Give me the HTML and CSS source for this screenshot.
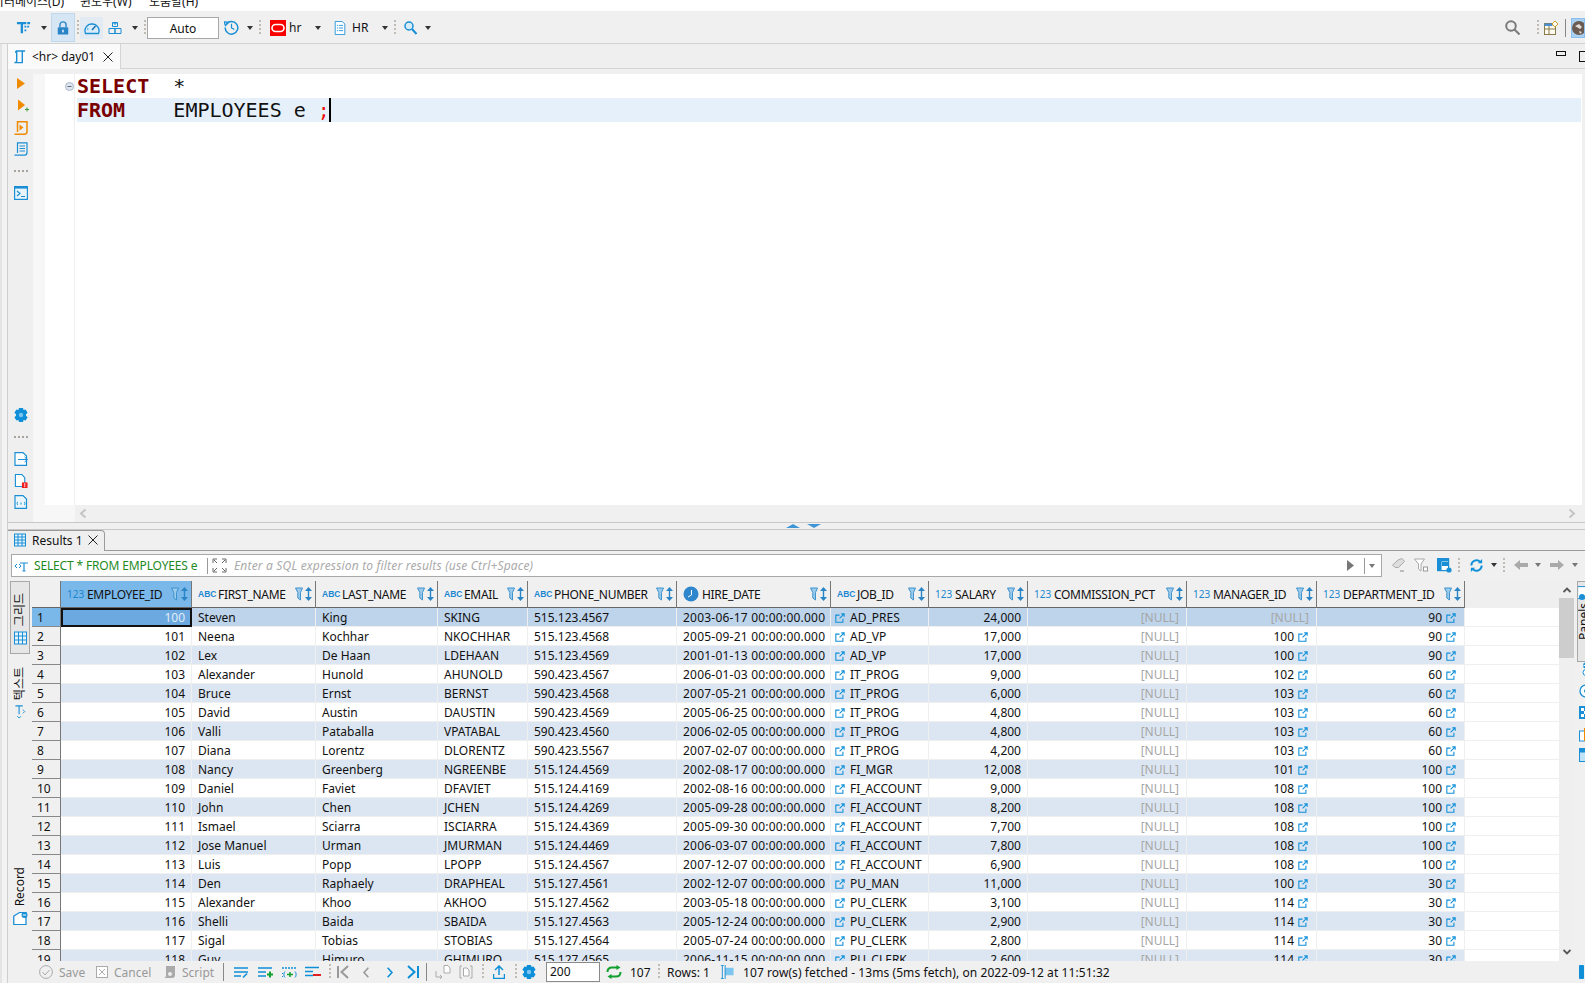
FILE: index.html
```html
<!DOCTYPE html>
<html lang="ko">
<head>
<meta charset="utf-8">
<title>DBeaver</title>
<link rel="stylesheet" href="styles.css">
</head>
<body>
<svg class="defs" width="0" height="0">
<symbol id="lnk" viewBox="0 0 12 12"><path d="M7.500 1H11V4.500M11 1L5.500 6.500M9.500 7V11H1V2.500H5.500" fill="none" stroke="#0e8fd8" stroke-width="1.300"/></symbol>
<symbol id="flt" viewBox="0 0 8 14"><path d="M.5 1h7L5.500 5.500V13L2.800 11V5.500z" fill="#9ccbec" stroke="#3d93cf"/></symbol>
<symbol id="srt" viewBox="0 0 7 14"><path d="M3.500 0L7 4H4.200v6H7l-3.500 4L0 10h2.800V4H0z" fill="#2a85c6"/></symbol>
<symbol id="clk" viewBox="0 0 16 16"><circle cx="8" cy="8" r="7.500" fill="#2f86cc"/><path d="M8.500 4v5L5 11" fill="none" stroke="#fff"/></symbol>
<symbol id="gear" viewBox="0 0 14 14"><path d="M5 0h4l.6 2 2-.6 2 3.400L12 6.300v1.400l1.600 1.500-2 3.400-2-.6L9 14H5l-.6-2-2 .6-2-3.400L2 7.700V6.300L.4 4.800l2-3.400 2 .6z" fill="#0e8fd8"/><circle cx="7" cy="7" r="2.200" fill="#7cc5f0"/></symbol>
<symbol id="sync" viewBox="0 0 16 16"><path d="M2.500 8A5.500 5.500 0 0 1 12 4.200M13.500 8A5.500 5.500 0 0 1 4 11.800" fill="none" stroke="#0e8fd8" stroke-width="2"/><path d="M9.500 5.500h4.500V1zM6.500 10.500H2V15z" fill="#0e8fd8"/></symbol>
</svg>

<div class="app">
  <div class="menubar">
    <span class="menu menu-data"><span>데이터베이스(D)</span></span>
    <span class="menu menu-win">윈도우(W)</span>
    <span class="menu menu-help">도움말(H)</span>
  </div>

  <div class="toolbar">
    <svg class="ic w15 ml16" viewBox="0 0 16 16"><path d="M1 2h10v2.500H7.500V14H5V4.500H1z" fill="#1a8fd6"/><path d="M12 2h3v2.500h-3zM9 6h2v2H9zM12 6h2v2h-2zM9 10h2v2H9z" fill="#1a8fd6"/></svg>
    <i class="dd ml10"></i>
    <span class="tbtn lockbtn ml4"><svg class="ic w14" viewBox="0 0 14 16"><path d="M3.500 7V4.500a3.500 3.500 0 0 1 7 0V7" fill="none" stroke="#2a85c6" stroke-width="1.600"/><rect x="1" y="7" width="12" height="8.500" rx="1" fill="#2a85c6"/><rect x="6" y="10" width="2" height="3" fill="#cfe3f5"/></svg></span>
    <i class="sep ml2"></i>
    <span class="tbtn gaugebtn ml1"><svg class="ic w16" viewBox="0 0 16 14"><path d="M1.500 12.500a7 7 0 1 1 13 0z" fill="#d8ecfa" stroke="#1a8fd6" stroke-width="1.300"/><path d="M8 9l3.500-4" stroke="#1a6fae" stroke-width="1.500"/><path d="M3 8h1.500M8 2.500V4" stroke="#1a8fd6"/></svg></span>
    <svg class="ic w14 ml5" viewBox="0 0 14 14"><path d="M4.500 1.500h5v4h-5zM1 7.500h6v5H1zM7 7.500h6v5H7zM6 1.500v1.500h2V1.500" fill="none" stroke="#1a8fd6"/></svg>
    <i class="dd ml10"></i>
    <i class="sep ml6"></i>
    <span class="autobox ml1">Auto</span>
    <svg class="ic w15 ml5" viewBox="0 0 16 16"><path d="M2.500 4.500A6.700 6.700 0 1 1 1.300 8" fill="none" stroke="#1a8fd6" stroke-width="1.600"/><path d="M0 2l5 .5L1.500 6zM8 4v4.500L11 10" fill="none" stroke="#1a8fd6" stroke-width="1.300"/></svg>
    <i class="dd ml8"></i>
    <i class="sep ml6"></i>
    <svg class="ic w16 ml9" viewBox="0 0 16 16"><rect width="16" height="16" fill="#f80000"/><rect x="2" y="4.500" width="12" height="7" rx="3.500" fill="none" stroke="#fff" stroke-width="1.600"/></svg>
    <span class="tbtext w25 ml3">hr</span>
    <i class="dd ml1"></i>
    <svg class="ic w12 ml13" viewBox="0 0 12 16"><path d="M.5.500H8.500L11.500 3.500V15.500H.5z" fill="#fff" stroke="#1a8fd6"/><path d="M2.500 5h1.500M5 5h4.500M2.500 8h1.500M5 8h4.500M2.500 11h1.500M5 11h4.500" stroke="#1a8fd6"/></svg>
    <span class="tbtext w30 ml6">HR</span>
    <i class="dd"></i>
    <i class="sep ml6"></i>
    <svg class="ic w13 ml8" viewBox="0 0 13 14"><circle cx="5" cy="5" r="4" fill="#d8ecfa" stroke="#1a8fd6" stroke-width="1.500"/><path d="M8 8l4.500 5" stroke="#1a8fd6" stroke-width="2"/></svg>
    <i class="dd ml8"></i>
    <span class="grow"></span>
    <svg class="ic w15" viewBox="0 0 15 15"><circle cx="6" cy="6" r="4.800" fill="none" stroke="#7a7a7a" stroke-width="2"/><path d="M9.500 9.500l5 5" stroke="#7a7a7a" stroke-width="2"/></svg>
    <i class="sep ml17"></i>
    <svg class="ic w14 ml5" viewBox="0 0 14 14"><rect x=".5" y="2.500" width="11" height="11" fill="#fdfbf0" stroke="#8a7a4a"/><path d="M.5 2.500h8v2.500h-8z" fill="#4a90d0"/><path d="M.5 8h11M5 5v8.500" stroke="#8a7a4a"/><path d="M11 0l3 3-3 3-3-3z" fill="#fff" stroke="#d0a020"/></svg>
    <i class="vline ml7"></i>
    <span class="perspbtn ml5"><svg class="ic w14" viewBox="0 0 14 14"><circle cx="7" cy="7" r="7" fill="#6b5a50"/><path d="M3 5l4-2 3 3-2 2zM7 10l3 1-2 2z" fill="#e0dcd8"/></svg></span>
  </div>

  <div class="workspace">
    <div class="gutter"></div>
    <div class="panes">
      <div class="tabstrip">
        <div class="tab-sql">
          <svg class="ic w13" viewBox="0 0 13 15"><path d="M3.500 12.500V1h9M3.500 1c-1.500 0-1.500 2 0 2M9.500 1v12.500H1c1 0 2-.5 2.500-1.500" fill="none" stroke="#1a8fd6" stroke-width="1.500"/></svg>
          <span class="tabtext">&lt;hr&gt; day01</span>
          <svg class="ic w10 ml6" viewBox="0 0 10 10"><path d="M.5.500l9 9M9.500.500l-9 9" stroke="#222"/></svg>
        </div>
        <span class="grow"></span>
        <i class="win-min"></i>
        <i class="win-max"></i>
      </div>

      <div class="editor">
        <div class="rail">
          <svg class="ic w8" viewBox="0 0 8 11"><path d="M0 0l8 5.500L0 11z" fill="#f08a00"/></svg>
          <svg class="ic w14 mt10 railshift" viewBox="0 0 14 13"><path d="M3 0l7 5.500L3 11z" fill="#f08a00"/><path d="M10 10h4M12 8v4" stroke="#3a9a3a"/></svg>
          <svg class="ic w14 mt8" viewBox="0 0 14 14"><path d="M3.500 11V.8H13V10.500c0 1.500-1 2.700-2.500 2.700H.5" fill="none" stroke="#f08a00" stroke-width="1.500"/><path d="M5.500 3.500l4 3-4 3z" fill="#f08a00"/></svg>
          <svg class="ic w14 mt7" viewBox="0 0 14 14"><path d="M3.500 11V.8H13V10.500c0 1.500-1 2.700-2.500 2.700H.5" fill="none" stroke="#1a8fd6" stroke-width="1.200"/><path d="M5.500 4H11M5.500 6.500H11M5.500 9H11" stroke="#1a8fd6"/></svg>
          <i class="hdots mt14"></i>
          <svg class="ic w14 mt14" viewBox="0 0 14 14"><rect x=".6" y=".6" width="12.800" height="12.800" fill="#e8f4fc" stroke="#1a8fd6" stroke-width="1.200"/><path d="M.6.600h12.800v2H.6z" fill="#1a8fd6"/><path d="M3 5l3 2.500L3 10M7 10.500h4" fill="none" stroke="#1a8fd6" stroke-width="1.200"/></svg>
          <svg class="ic w14 push"><use href="#gear"/></svg>
          <i class="hdots mt14"></i>
          <svg class="ic w14 mt14" viewBox="0 0 14 14"><path d="M1 .6h8L12.500 4V13.400H1z" fill="#fff" stroke="#1a8fd6" stroke-width="1.200"/><path d="M4 7.500h9M10.500 5l3 2.500-3 2.500" fill="none" stroke="#1a8fd6"/></svg>
          <svg class="ic w14 mt8" viewBox="0 0 14 15"><path d="M1 .6h7L11 4V13.400H1z" fill="#fff" stroke="#1a8fd6" stroke-width="1.200"/><rect x="8" y="9" width="6" height="6" fill="#f02020"/><path d="M11 10v2.500M11 13v1" stroke="#fff"/></svg>
          <svg class="ic w14 mt7" viewBox="0 0 14 14"><path d="M1 .6h8L12.500 4V13.400H1z" fill="#eaf5fc" stroke="#1a8fd6" stroke-width="1.200"/><path d="M4 7c-1.500 0-1 3 0 3M10 7c1.500 0 1 3 0 3M7 7.500v2" fill="none" stroke="#1a8fd6"/></svg>
        </div>
        <div class="editor-col">
          <div class="editor-top"></div>
          <div class="editor-main">
            <div class="ruler"></div>
            <div class="lnums"><svg class="fold" viewBox="0 0 9 9"><circle cx="4.500" cy="4.500" r="4" fill="#dde5ee" stroke="#a8b6c6"/><path d="M2.500 4.500h4" stroke="#667"/></svg></div>
            <div class="code">
              <div class="line"><b class="kw">SELECT</b>  *</div>
              <div class="line line-cur"><b class="kw">FROM</b>    EMPLOYEES e <span class="semi">;</span><i class="caret"></i></div>
            </div>
          </div>
          <div class="hscroll">
            <div class="ruler-foot"></div>
            <svg class="ic w8 ml4" viewBox="0 0 8 10"><path d="M6.500 1L2 5l4.500 4" fill="none" stroke="#c4c4c4" stroke-width="2"/></svg>
            <span class="grow"></span>
            <svg class="ic w8 hs-r" viewBox="0 0 8 10"><path d="M1.500 1L6 5 1.500 9" fill="none" stroke="#c4c4c4" stroke-width="2"/></svg>
          </div>
        </div>
      </div>

      <div class="sash"><i class="sash-up"></i><i class="sash-down"></i></div>

      <div class="tabstrip2">
        <div class="tab2">
          <svg class="ic w12" viewBox="0 0 12 13"><rect x=".5" y=".5" width="11" height="12" fill="#e8f4fc" stroke="#1a8fd6"/><path d="M.5 3.500h11M.5 6.500h11M.5 9.500h11M4 .5v12M8 .5v12" stroke="#1a8fd6"/></svg>
          <span class="tab2text">Results 1</span>
          <svg class="ic w10" viewBox="0 0 10 10"><path d="M.5.500l9 9M9.500.500l-9 9" stroke="#222"/></svg>
        </div>
      </div>

      <div class="filterrow">
        <div class="filterbox">
          <svg class="ic w13 ml3" viewBox="0 0 13 12"><path d="M5 3h8M9 3v8M7.500 11h3" fill="none" stroke="#1a8fd6" stroke-width="1.200"/><path d="M2 4L0 6l2 2M4 4l2 2-2 2" fill="none" stroke="#1a8fd6"/></svg>
          <span class="fq">SELECT * FROM EMPLOYEES e</span>
          <i class="fvline"></i>
          <svg class="ic w15 ml4" viewBox="0 0 15 15"><path d="M1 5V1h4M2 2l3 3M14 5V1h-4M13 2l-3 3M1 10v4h4M2 13l3-3M14 10v4h-4M13 13l-3-3" fill="none" stroke="#666"/></svg>
          <span class="fph">Enter a SQL expression to filter results (use Ctrl+Space)</span>
          <span class="grow"></span>
          <svg class="ic w7" viewBox="0 0 7 11"><path d="M0 0l7 5.500L0 11z" fill="#777"/></svg>
          <i class="fvline ml10"></i>
          <i class="dd dd-g ml4"></i>
          <span class="fend"></span>
        </div>
        <svg class="ic w14 ml9" viewBox="0 0 14 14"><path d="M7 2l4-1.500 2.500 3-6 6H4L1.500 7z" fill="#ddd" stroke="#aaa"/><path d="M9 13h4" stroke="#888"/></svg>
        <svg class="ic w14 ml9" viewBox="0 0 14 14"><path d="M.5 1h10L7 6v7L4.500 11V6z" fill="#fff" stroke="#aaa"/><rect x="9.500" y="9" width="4" height="4" fill="#fff" stroke="#999"/></svg>
        <svg class="ic w15 ml9" viewBox="0 0 15 15"><rect x=".6" y=".6" width="11" height="12" fill="#fff" stroke="#1a8fd6" stroke-width="1.200"/><path d="M.6.600h11v3H.6zM.6 3.600h4v9h-4zM5 8h6.500v-4H5z" fill="#1a8fd6"/><circle cx="12" cy="12" r="2.600" fill="#1a8fd6"/></svg>
        <i class="sep ml6"></i>
        <svg class="ic w15 ml9"><use href="#sync"/></svg>
        <i class="dd ml7"></i>
        <i class="sep ml6"></i>
        <svg class="ic w14 ml9" viewBox="0 0 14 12"><path d="M0 6l6-5v3h8v4H6v3z" fill="#aaa"/></svg>
        <i class="dd dd-g ml7"></i>
        <svg class="ic w14 ml9" viewBox="0 0 14 12"><path d="M14 6L8 1v3H0v4h8v3z" fill="#aaa"/></svg>
        <i class="dd dd-g ml8"></i>
      </div>

      <div class="resultbody">
        <div class="vrail">
          <div class="vtab vtab-grid">
            <span class="vtext">그리드</span>
            <svg class="ic w13 vicon" viewBox="0 0 13 13"><rect x=".5" y=".5" width="12" height="12" fill="#e8f4fc" stroke="#1a8fd6"/><path d="M.5 4.500h12M.5 8.500h12M4.500.5v12M8.500.5v12" stroke="#1a8fd6"/></svg>
          </div>
          <div class="vtab vtab-text">
            <span class="vtext">텍스트</span>
            <svg class="ic w13 vicon" viewBox="0 0 13 15"><path d="M1 1h8M5 1v9" fill="none" stroke="#1a8fd6" stroke-width="1.200"/><path d="M9 5l2 2-2 2M3 12l2 2 2-2" fill="none" stroke="#1a8fd6"/></svg>
          </div>
          <div class="vtab vtab-rec">
            <span class="vtext vtext-l">Record</span>
            <svg class="ic w15 vicon" viewBox="0 0 15 13"><path d="M.6 12.400V4L5 .6h5v11.800z" transform="scale(1.300 1)" fill="#fff" stroke="#1a8fd6"/><circle cx="11.500" cy="3" r="3" fill="#1a8fd6"/><path d="M9.800 3h3.400" stroke="#fff"/></svg>
          </div>
        </div>

        <div class="gridwrap">
          <table class="grid">
            <colgroup>
              <col class="c0"><col class="c1"><col class="c2"><col class="c3"><col class="c4"><col class="c5"><col class="c6"><col class="c7"><col class="c8"><col class="c9"><col class="c10"><col class="c11"><col class="c12">
            </colgroup>
            <thead>
              <tr>
                <th class="corner"></th>
                <th class="hsel"><div class="hd"><span class="t123">123</span><span class="nm">EMPLOYEE_ID</span><svg class="flt"><use href="#flt"/></svg><svg class="srt"><use href="#srt"/></svg></div></th>
                <th><div class="hd"><span class="tabc">ABC</span><span class="nm">FIRST_NAME</span><svg class="flt"><use href="#flt"/></svg><svg class="srt"><use href="#srt"/></svg></div></th>
                <th><div class="hd"><span class="tabc">ABC</span><span class="nm">LAST_NAME</span><svg class="flt"><use href="#flt"/></svg><svg class="srt"><use href="#srt"/></svg></div></th>
                <th><div class="hd"><span class="tabc">ABC</span><span class="nm">EMAIL</span><svg class="flt"><use href="#flt"/></svg><svg class="srt"><use href="#srt"/></svg></div></th>
                <th><div class="hd"><span class="tabc">ABC</span><span class="nm">PHONE_NUMBER</span><svg class="flt"><use href="#flt"/></svg><svg class="srt"><use href="#srt"/></svg></div></th>
                <th><div class="hd"><svg class="tclk"><use href="#clk"/></svg><span class="nm">HIRE_DATE</span><svg class="flt"><use href="#flt"/></svg><svg class="srt"><use href="#srt"/></svg></div></th>
                <th><div class="hd"><span class="tabc">ABC</span><span class="nm">JOB_ID</span><svg class="flt"><use href="#flt"/></svg><svg class="srt"><use href="#srt"/></svg></div></th>
                <th><div class="hd"><span class="t123">123</span><span class="nm">SALARY</span><svg class="flt"><use href="#flt"/></svg><svg class="srt"><use href="#srt"/></svg></div></th>
                <th><div class="hd"><span class="t123">123</span><span class="nm">COMMISSION_PCT</span><svg class="flt"><use href="#flt"/></svg><svg class="srt"><use href="#srt"/></svg></div></th>
                <th><div class="hd"><span class="t123">123</span><span class="nm">MANAGER_ID</span><svg class="flt"><use href="#flt"/></svg><svg class="srt"><use href="#srt"/></svg></div></th>
                <th><div class="hd"><span class="t123">123</span><span class="nm">DEPARTMENT_ID</span><svg class="flt"><use href="#flt"/></svg><svg class="srt"><use href="#srt"/></svg></div></th>
                <th class="fill"></th>
              </tr>
            </thead>
            <tbody>
              <tr class="cur"><th>1</th><td class="n focus">100</td><td>Steven</td><td>King</td><td>SKING</td><td>515.123.4567</td><td>2003-06-17 00:00:00.000</td><td class="lk"><svg><use href="#lnk"/></svg>AD_PRES</td><td class="n">24,000</td><td class="nul">[NULL]</td><td class="nul">[NULL]</td><td class="rk">90<svg><use href="#lnk"/></svg></td><td class="fill"></td></tr>
              <tr><th>2</th><td class="n">101</td><td>Neena</td><td>Kochhar</td><td>NKOCHHAR</td><td>515.123.4568</td><td>2005-09-21 00:00:00.000</td><td class="lk"><svg><use href="#lnk"/></svg>AD_VP</td><td class="n">17,000</td><td class="nul">[NULL]</td><td class="rk">100<svg><use href="#lnk"/></svg></td><td class="rk">90<svg><use href="#lnk"/></svg></td><td class="fill"></td></tr>
              <tr><th>3</th><td class="n">102</td><td>Lex</td><td>De Haan</td><td>LDEHAAN</td><td>515.123.4569</td><td>2001-01-13 00:00:00.000</td><td class="lk"><svg><use href="#lnk"/></svg>AD_VP</td><td class="n">17,000</td><td class="nul">[NULL]</td><td class="rk">100<svg><use href="#lnk"/></svg></td><td class="rk">90<svg><use href="#lnk"/></svg></td><td class="fill"></td></tr>
              <tr><th>4</th><td class="n">103</td><td>Alexander</td><td>Hunold</td><td>AHUNOLD</td><td>590.423.4567</td><td>2006-01-03 00:00:00.000</td><td class="lk"><svg><use href="#lnk"/></svg>IT_PROG</td><td class="n">9,000</td><td class="nul">[NULL]</td><td class="rk">102<svg><use href="#lnk"/></svg></td><td class="rk">60<svg><use href="#lnk"/></svg></td><td class="fill"></td></tr>
              <tr><th>5</th><td class="n">104</td><td>Bruce</td><td>Ernst</td><td>BERNST</td><td>590.423.4568</td><td>2007-05-21 00:00:00.000</td><td class="lk"><svg><use href="#lnk"/></svg>IT_PROG</td><td class="n">6,000</td><td class="nul">[NULL]</td><td class="rk">103<svg><use href="#lnk"/></svg></td><td class="rk">60<svg><use href="#lnk"/></svg></td><td class="fill"></td></tr>
              <tr><th>6</th><td class="n">105</td><td>David</td><td>Austin</td><td>DAUSTIN</td><td>590.423.4569</td><td>2005-06-25 00:00:00.000</td><td class="lk"><svg><use href="#lnk"/></svg>IT_PROG</td><td class="n">4,800</td><td class="nul">[NULL]</td><td class="rk">103<svg><use href="#lnk"/></svg></td><td class="rk">60<svg><use href="#lnk"/></svg></td><td class="fill"></td></tr>
              <tr><th>7</th><td class="n">106</td><td>Valli</td><td>Pataballa</td><td>VPATABAL</td><td>590.423.4560</td><td>2006-02-05 00:00:00.000</td><td class="lk"><svg><use href="#lnk"/></svg>IT_PROG</td><td class="n">4,800</td><td class="nul">[NULL]</td><td class="rk">103<svg><use href="#lnk"/></svg></td><td class="rk">60<svg><use href="#lnk"/></svg></td><td class="fill"></td></tr>
              <tr><th>8</th><td class="n">107</td><td>Diana</td><td>Lorentz</td><td>DLORENTZ</td><td>590.423.5567</td><td>2007-02-07 00:00:00.000</td><td class="lk"><svg><use href="#lnk"/></svg>IT_PROG</td><td class="n">4,200</td><td class="nul">[NULL]</td><td class="rk">103<svg><use href="#lnk"/></svg></td><td class="rk">60<svg><use href="#lnk"/></svg></td><td class="fill"></td></tr>
              <tr><th>9</th><td class="n">108</td><td>Nancy</td><td>Greenberg</td><td>NGREENBE</td><td>515.124.4569</td><td>2002-08-17 00:00:00.000</td><td class="lk"><svg><use href="#lnk"/></svg>FI_MGR</td><td class="n">12,008</td><td class="nul">[NULL]</td><td class="rk">101<svg><use href="#lnk"/></svg></td><td class="rk">100<svg><use href="#lnk"/></svg></td><td class="fill"></td></tr>
              <tr><th>10</th><td class="n">109</td><td>Daniel</td><td>Faviet</td><td>DFAVIET</td><td>515.124.4169</td><td>2002-08-16 00:00:00.000</td><td class="lk"><svg><use href="#lnk"/></svg>FI_ACCOUNT</td><td class="n">9,000</td><td class="nul">[NULL]</td><td class="rk">108<svg><use href="#lnk"/></svg></td><td class="rk">100<svg><use href="#lnk"/></svg></td><td class="fill"></td></tr>
              <tr><th>11</th><td class="n">110</td><td>John</td><td>Chen</td><td>JCHEN</td><td>515.124.4269</td><td>2005-09-28 00:00:00.000</td><td class="lk"><svg><use href="#lnk"/></svg>FI_ACCOUNT</td><td class="n">8,200</td><td class="nul">[NULL]</td><td class="rk">108<svg><use href="#lnk"/></svg></td><td class="rk">100<svg><use href="#lnk"/></svg></td><td class="fill"></td></tr>
              <tr><th>12</th><td class="n">111</td><td>Ismael</td><td>Sciarra</td><td>ISCIARRA</td><td>515.124.4369</td><td>2005-09-30 00:00:00.000</td><td class="lk"><svg><use href="#lnk"/></svg>FI_ACCOUNT</td><td class="n">7,700</td><td class="nul">[NULL]</td><td class="rk">108<svg><use href="#lnk"/></svg></td><td class="rk">100<svg><use href="#lnk"/></svg></td><td class="fill"></td></tr>
              <tr><th>13</th><td class="n">112</td><td>Jose Manuel</td><td>Urman</td><td>JMURMAN</td><td>515.124.4469</td><td>2006-03-07 00:00:00.000</td><td class="lk"><svg><use href="#lnk"/></svg>FI_ACCOUNT</td><td class="n">7,800</td><td class="nul">[NULL]</td><td class="rk">108<svg><use href="#lnk"/></svg></td><td class="rk">100<svg><use href="#lnk"/></svg></td><td class="fill"></td></tr>
              <tr><th>14</th><td class="n">113</td><td>Luis</td><td>Popp</td><td>LPOPP</td><td>515.124.4567</td><td>2007-12-07 00:00:00.000</td><td class="lk"><svg><use href="#lnk"/></svg>FI_ACCOUNT</td><td class="n">6,900</td><td class="nul">[NULL]</td><td class="rk">108<svg><use href="#lnk"/></svg></td><td class="rk">100<svg><use href="#lnk"/></svg></td><td class="fill"></td></tr>
              <tr><th>15</th><td class="n">114</td><td>Den</td><td>Raphaely</td><td>DRAPHEAL</td><td>515.127.4561</td><td>2002-12-07 00:00:00.000</td><td class="lk"><svg><use href="#lnk"/></svg>PU_MAN</td><td class="n">11,000</td><td class="nul">[NULL]</td><td class="rk">100<svg><use href="#lnk"/></svg></td><td class="rk">30<svg><use href="#lnk"/></svg></td><td class="fill"></td></tr>
              <tr><th>16</th><td class="n">115</td><td>Alexander</td><td>Khoo</td><td>AKHOO</td><td>515.127.4562</td><td>2003-05-18 00:00:00.000</td><td class="lk"><svg><use href="#lnk"/></svg>PU_CLERK</td><td class="n">3,100</td><td class="nul">[NULL]</td><td class="rk">114<svg><use href="#lnk"/></svg></td><td class="rk">30<svg><use href="#lnk"/></svg></td><td class="fill"></td></tr>
              <tr><th>17</th><td class="n">116</td><td>Shelli</td><td>Baida</td><td>SBAIDA</td><td>515.127.4563</td><td>2005-12-24 00:00:00.000</td><td class="lk"><svg><use href="#lnk"/></svg>PU_CLERK</td><td class="n">2,900</td><td class="nul">[NULL]</td><td class="rk">114<svg><use href="#lnk"/></svg></td><td class="rk">30<svg><use href="#lnk"/></svg></td><td class="fill"></td></tr>
              <tr><th>18</th><td class="n">117</td><td>Sigal</td><td>Tobias</td><td>STOBIAS</td><td>515.127.4564</td><td>2005-07-24 00:00:00.000</td><td class="lk"><svg><use href="#lnk"/></svg>PU_CLERK</td><td class="n">2,800</td><td class="nul">[NULL]</td><td class="rk">114<svg><use href="#lnk"/></svg></td><td class="rk">30<svg><use href="#lnk"/></svg></td><td class="fill"></td></tr>
              <tr><th>19</th><td class="n">118</td><td>Guy</td><td>Himuro</td><td>GHIMURO</td><td>515.127.4565</td><td>2006-11-15 00:00:00.000</td><td class="lk"><svg><use href="#lnk"/></svg>PU_CLERK</td><td class="n">2,600</td><td class="nul">[NULL]</td><td class="rk">114<svg><use href="#lnk"/></svg></td><td class="rk">30<svg><use href="#lnk"/></svg></td><td class="fill"></td></tr>
            </tbody>
          </table>
        </div>

        <div class="vscroll">
          <svg class="ic w8 vs-up" viewBox="0 0 8 6"><path d="M.5 5L4 1.500 7.500 5" fill="none" stroke="#555" stroke-width="1.800"/></svg>
          <div class="vthumb"></div>
          <span class="grow"></span>
          <svg class="ic w8 vs-down" viewBox="0 0 8 6"><path d="M.5 1L4 4.500 7.500 1" fill="none" stroke="#555" stroke-width="1.800"/></svg>
        </div>

        <div class="prail">
          <div class="ptab">
            <svg class="ic w14" viewBox="0 0 14 14"><rect x=".6" y=".6" width="12" height="12" fill="#fff" stroke="#1a8fd6"/><circle cx="5" cy="11" r="3" fill="#1a8fd6"/></svg>
            <span class="vtext ptext">Panels</span>
          </div>
          <svg class="ic w14 p1" viewBox="0 0 14 14"><circle cx="7" cy="3.500" r="3" fill="#1a8fd6"/><path d="M4.500 3.500h5" stroke="#fff"/><circle cx="7" cy="10.500" r="3" fill="#fff" stroke="#1a8fd6"/></svg>
          <svg class="ic w14 p2" viewBox="0 0 14 14"><circle cx="7" cy="7" r="6" fill="#fff" stroke="#1a8fd6" stroke-width="1.300"/><circle cx="7" cy="7" r="2" fill="#1a8fd6"/></svg>
          <svg class="ic w14 p3" viewBox="0 0 14 14"><rect width="14" height="13" fill="#1a8fd6"/><path d="M2 2h3v3H2zM8 2h3v3H8zM5 5h3v3H5zM2 8h3v3H2zM8 8h3v3H8z" fill="#fff"/></svg>
          <svg class="ic w14 p4" viewBox="0 0 14 14"><rect x=".5" y="3" width="12" height="10" fill="#fff" stroke="#1a8fd6"/><path d="M5 0h2v13H5z" fill="#f08a00"/></svg>
          <svg class="ic w14 p5" viewBox="0 0 14 14"><rect x=".5" y=".5" width="13" height="13" fill="#bfe2f7" stroke="#1a8fd6"/><path d="M.5.500h13v4H.5z" fill="#1a8fd6"/></svg>
        </div>
      </div>

      <div class="statusbar">
        <svg class="ic w14 ml31" viewBox="0 0 14 14"><circle cx="7" cy="7" r="6.400" fill="none" stroke="#aaa"/><path d="M3.500 7l2.500 3 4.500-5" fill="none" stroke="#aaa"/></svg>
        <span class="st st-dim w37 ml6">Save</span>
        <svg class="ic w12" viewBox="0 0 12 12"><rect x=".5" y=".5" width="11" height="11" fill="#fff" stroke="#aaa"/><path d="M3 3l6 6M9 3l-6 6" stroke="#aaa"/></svg>
        <span class="st st-dim w49 ml6">Cancel</span>
        <svg class="ic w13" viewBox="0 0 13 14"><path d="M3 1h9v9c0 2-1 3-3 3H1c1 0 2-1 2-3z" fill="#aaa"/><circle cx="7" cy="9" r="2" fill="#eee"/></svg>
        <span class="st st-dim w41 ml6">Script</span>
        <i class="vline"></i>
        <svg class="ic w15 ml10" viewBox="0 0 15 12"><path d="M0 1.500h14M0 5.500h14M0 9.500h7" stroke="#0e8fd8" stroke-width="1.600"/><path d="M9 11l4-4" stroke="#0e8fd8" stroke-width="1.600"/></svg>
        <svg class="ic w15 ml9" viewBox="0 0 15 12"><path d="M0 1.500h14M0 5.500h8M0 9.500h8" stroke="#0e8fd8" stroke-width="1.600"/><path d="M9 8h6M12 5v6" stroke="#12a030" stroke-width="2"/></svg>
        <svg class="ic w15 ml9" viewBox="0 0 15 12"><path d="M0 1.500h14" stroke="#0e8fd8" stroke-dasharray="2 1" stroke-width="1.600"/><path d="M3 5c-1.500 1-1.500 5 0 6M13 5c1.500 1 1.500 5 0 6M0 7h1M0 10h1" fill="none" stroke="#0e8fd8"/><path d="M5 8h6M8 5.500v5" stroke="#12a030" stroke-width="1.500"/></svg>
        <svg class="ic w16 ml8" viewBox="0 0 16 12"><path d="M0 1.500h14M0 5.500h8M0 9.500h8" stroke="#0e8fd8" stroke-width="1.600"/><path d="M8 9h8" stroke="#e02020" stroke-width="2"/></svg>
        <i class="sep ml8"></i>
        <svg class="ic w12 ml6" viewBox="0 0 12 14"><path d="M1 1v12" stroke="#999" stroke-width="2"/><path d="M11 1L4.500 7l6.500 6" fill="none" stroke="#999" stroke-width="2"/></svg>
        <svg class="ic w8 ml13" viewBox="0 0 8 14"><path d="M7 1L1.500 7 7 13" fill="none" stroke="#999" stroke-width="2"/></svg>
        <svg class="ic w8 ml16" viewBox="0 0 8 14"><path d="M1 1l5.500 6L1 13" fill="none" stroke="#0e8fd8" stroke-width="2"/></svg>
        <svg class="ic w12 ml13" viewBox="0 0 12 14"><path d="M1 1l6.500 6L1 13" fill="none" stroke="#0e8fd8" stroke-width="2"/><path d="M11 1v12" stroke="#0e8fd8" stroke-width="2"/></svg>
        <i class="vline ml7"></i>
        <svg class="ic w16 ml8" viewBox="0 0 16 14"><path d="M1 6v6h6M5 10l2 2-2 2" fill="none" stroke="#aaa"/><path d="M9 .5h4L15 3v5H9z" fill="#fff" stroke="#aaa"/></svg>
        <svg class="ic w14 ml8" viewBox="0 0 14 14"><path d="M3 1H1v12h2M11 1h2v12h-2" fill="none" stroke="#aaa"/><path d="M4.500 3h3.500l2 2v6H4.500z" fill="#fff" stroke="#aaa"/></svg>
        <i class="sep ml9"></i>
        <svg class="ic w12 ml9" viewBox="0 0 12 14"><path d="M6 10V1M2 5l4-4 4 4M.5 9v4.500h11V9" fill="none" stroke="#0e8fd8" stroke-width="1.500"/></svg>
        <i class="sep ml10"></i>
        <svg class="ic w14 ml5"><use href="#gear"/></svg>
        <span class="fetchbox ml10">200</span>
        <svg class="ic w16 ml6" viewBox="0 0 16 14"><path d="M1.500 7c0-3 2-4.500 4.500-4.500h6M14.500 7c0 3-2 4.500-4.500 4.500H4" fill="none" stroke="#12a030" stroke-width="2"/><path d="M10.500 0l4 2.500-4 2.500zM5.500 9l-4 2.500 4 2.500z" fill="#12a030"/></svg>
        <span class="st w28 ml8">107</span>
        <i class="sep"></i>
        <span class="st w53 ml7">Rows: 1</span>
        <svg class="ic w14" viewBox="0 0 14 15"><rect x="5" y="3" width="9" height="8" fill="#7cc5f0"/><path d="M2 .5v14M.5 .5h3M.5 14.500h3" fill="none" stroke="#1a8fd6"/><path d="M5 0v15" stroke="#1a8fd6"/></svg>
        <span class="st st-msg ml9">107 row(s) fetched - 13ms (5ms fetch), on 2022-09-12 at 11:51:32</span>
        <span class="grow"></span>
        <i class="bluebar"></i>
      </div>
    </div>
  </div>
</div>
</body>
</html>
```
FILE: styles.css
```css
* { box-sizing: border-box; }
html, body { margin: 0; padding: 0; }
body { width: 1585px; height: 983px; overflow: hidden; background: #f0f0f0; color: #111;
  font-family: "Noto Sans", "Noto Sans CJK KR", sans-serif; font-size: 12px; }
.defs { position: absolute; }
i { display: block; font-style: normal; }
.app { display: flex; flex-direction: column; width: 1585px; height: 983px; overflow: hidden; }
.grow { flex: 1; }

/* icon sizing */
.ic { display: block; flex: none; }
.w7 { width: 7px; height: 11px; } .w8 { width: 8px; height: 11px; } .w10 { width: 10px; height: 10px; }
.w12 { width: 12px; height: 14px; } .w13 { width: 13px; height: 14px; } .w14 { width: 14px; height: 14px; }
.w15 { width: 15px; height: 15px; } .w16 { width: 16px; height: 16px; }
.ml1 { margin-left: 1px; } .ml2 { margin-left: 2px; } .ml3 { margin-left: 3px; } .ml4 { margin-left: 4px; }
.ml5 { margin-left: 5px; } .ml6 { margin-left: 6px; } .ml7 { margin-left: 7px; } .ml8 { margin-left: 8px; }
.ml9 { margin-left: 9px; } .ml10 { margin-left: 10px; } .ml13 { margin-left: 13px; } .ml16 { margin-left: 16px; }
.ml17 { margin-left: 17px; } .ml31 { margin-left: 31px; }
.mt7 { margin-top: 7px; } .mt8 { margin-top: 8px; } .mt9 { margin-top: 9px; } .mt10 { margin-top: 10px; } .mt14 { margin-top: 14px; }

/* menu */
.menubar { height: 11px; flex: none; background: #fff; display: flex; overflow: hidden; font-size: 12px; line-height: 14px; }
.menu { display: block; margin-top: -5px; white-space: nowrap; }
.menu-data { width: 64px; display: flex; justify-content: flex-end; overflow: hidden; flex: none; }
.menu-win { margin-left: 16px; width: 69px; }

/* toolbar */
.toolbar { height: 33px; flex: none; display: flex; align-items: center; background: #f0f0f0; border-bottom: 1px solid #d2d2d2; padding-top: 1px; overflow: hidden; }
.dd { width: 0; height: 0; flex: none; border-left: 3.5px solid transparent; border-right: 3.5px solid transparent; border-top: 4px solid #333; }
.dd-g { border-top-color: #777; }
.sep { width: 2px; height: 16px; flex: none; background: repeating-linear-gradient(#c0bcb4 0 2px, transparent 2px 4px); }
.vline { width: 1px; height: 18px; flex: none; background: #888; }
.tbtn { display: flex; align-items: center; justify-content: center; flex: none; }
.lockbtn { width: 24px; height: 29px; background: #d6e6f5; border: 1px solid #c0d8ee; }
.gaugebtn { width: 23px; height: 22px; background: #e2ebf3; }
.perspbtn { width: 14px; height: 20px; background: #a8d0f0; border: 1px solid #8cc0ea; flex: none; overflow: hidden; display: flex; align-items: center; }
.autobox { width: 72px; height: 22px; flex: none; background: #fff; border: 1px solid #a8a8a8; text-align: center; font-size: 12px; line-height: 21px; }
.tbtext { font-size: 12px; flex: none; }
.w25 { width: 25px; } .w30 { width: 30px; }

/* workspace */
.workspace { flex: 1; display: flex; min-height: 0; }
.gutter { width: 8px; flex: none; background: #f3f3f3; border-left: 2px solid #e4e4e4; border-right: 1px solid #cfcfcf; }
.panes { flex: 1; min-width: 0; display: flex; flex-direction: column; }

.tabstrip { height: 25px; flex: none; display: flex; background: #efefef; border-bottom: 1px solid #d4d4d4; }
.tab-sql { width: 113px; height: 25px; background: #fafafa; border-right: 1px solid #d4d4d4; display: flex; align-items: center; padding-left: 5px; }
.tabtext { margin-left: 6px; width: 65px; font-size: 12px; white-space: nowrap; }
.win-min { width: 10px; height: 5px; border: 1px solid #111; margin: 7px 13px 0 0; flex: none; }
.win-max { width: 6px; height: 11px; border: 1px solid #111; border-right: 0; margin-top: 7px; flex: none; }

/* editor */
.editor { height: 453px; flex: none; display: flex; }
.rail { width: 25px; flex: none; background: #efefef; display: flex; flex-direction: column; align-items: center; padding: 9px 0 13px; }
.railshift { margin-left: 3px; }
.hdots { width: 14px; height: 2px; flex: none; background: repeating-linear-gradient(90deg, #a8a49c 0 2px, transparent 2px 4px); }
.push { margin-top: auto; }
.editor-col { flex: 1; min-width: 0; display: flex; flex-direction: column; margin-right: 3px; }
.editor-top { height: 5px; flex: none; }
.editor-main { flex: 1; display: flex; min-height: 0; background: #fff; }
.ruler { width: 12px; flex: none; background: #f7f7f7; }
.lnums { width: 30px; flex: none; background: #fff; border-right: 1px solid #efefef; display: flex; justify-content: flex-end; align-items: flex-start; padding: 8px 0 0; }
.fold { width: 9px; height: 9px; display: block; }
.code { flex: 1; min-width: 0; font-family: "DejaVu Sans Mono", monospace; font-size: 20px; line-height: 24px; padding-left: 2px; color: #111; }
.line { height: 24px; margin-right: 1px; white-space: pre; }
.line-cur { background: #e6f0fb; }
.kw { color: #7a0000; font-weight: bold; }
.semi { color: #f01010; }
.caret { display: inline-block; width: 2px; height: 24px; background: #000; vertical-align: top; margin-left: -1px; }
.hscroll { height: 17px; flex: none; display: flex; align-items: center; }
.ruler-foot { width: 42px; height: 17px; background: #f7f7f7; flex: none; }
.hs-r { margin-right: 6px; }

/* sash */
.sash { height: 8px; flex: none; display: flex; align-items: center; padding-left: 778px; border-top: 1px solid #c8c8c8; border-bottom: 1px solid #c8c8c8; }
.sash-up { width: 0; height: 0; border-left: 7px solid transparent; border-right: 7px solid transparent; border-bottom: 4px solid #3f95d6; }
.sash-down { width: 0; height: 0; margin-left: 7px; border-left: 7px solid transparent; border-right: 7px solid transparent; border-top: 4px solid #3f95d6; }

/* results tabs */
.tabstrip2 { height: 21px; flex: none; border-bottom: 1px solid #9a9a9a; display: flex; }
.tab2 { width: 97px; height: 21px; background: #efefef; border-right: 1px solid #9a9a9a; border-top: 1px solid #9a9a9a; border-top-right-radius: 4px; display: flex; align-items: center; padding: 0 0 2px 6px; }
.tab2text { margin-left: 6px; width: 56px; font-size: 12px; white-space: nowrap; }

/* filter */
.filterrow { height: 30px; flex: none; display: flex; align-items: flex-start; padding: 3px 0 0 3px; }
.filterrow > .ic, .filterrow > .sep { margin-top: 4px; }
.filterrow > .dd { margin-top: 9px; }
.filterbox { width: 1371px; height: 23px; flex: none; background: #fff; border: 1px solid #a8a8a8; display: flex; align-items: center; }
.fq { margin-left: 6px; width: 173px; color: #1f8a1f; font-size: 12px; letter-spacing: -.15px; white-space: nowrap; overflow: hidden; }
.fvline { width: 1px; height: 16px; background: #999; flex: none; }
.fph { margin-left: 7px; color: #aaa; font-style: italic; font-size: 12px; letter-spacing: .18px; white-space: nowrap; }
.fend { width: 6px; flex: none; }

/* results */
.resultbody { height: 380px; flex: none; display: flex; }
.vrail { width: 24px; flex: none; display: flex; flex-direction: column; }
.vtab { display: flex; flex-direction: column; align-items: center; }
.vtab-grid { width: 20px; height: 73px; margin-left: 2px; background: #e6e6e6; border: 1px solid #a8a8a8; padding-top: 11px; }
.vtab-text { width: 20px; margin: 13px 0 0 2px; }
.vtab-rec { width: 20px; margin: auto 0 35px 2px; }
.vtext { writing-mode: vertical-rl; text-orientation: sideways; transform: rotate(180deg); font-size: 12px; line-height: 14px; white-space: nowrap; display: block; }
.vicon { margin-top: 5px; }
.gridwrap { width: 1527px; flex: none; height: 380px; overflow: hidden; background: #fff; }
.grid { border-collapse: separate; border-spacing: 0; table-layout: fixed; width: 1527px; font-size: 12px; }
.c0 { width: 29px; } .c1 { width: 131px; } .c2 { width: 124px; } .c3 { width: 122px; } .c4 { width: 90px; }
.c5 { width: 149px; } .c6 { width: 154px; } .c7 { width: 98px; } .c8 { width: 99px; } .c9 { width: 159px; }
.c10 { width: 130px; } .c11 { width: 148px; } .c12 { width: 94px; }
.grid thead th { height: 27px; padding: 0; background: #f0f0f0; font-weight: normal; border-right: 1px solid #777; border-bottom: 1px solid #666; }
.grid thead th.hsel { background: #7ab8ea; }
.grid thead th.fill { border: 0; background: #efefef; }
.hd { display: flex; align-items: center; height: 26px; padding: 0 3px 0 6px; text-align: left; white-space: nowrap; overflow: hidden; }
.t123 { color: #1b87d0; font-size: 10px; width: 20px; flex: none; }
.tabc { color: #1b87d0; font-family: "Liberation Sans", sans-serif; font-weight: bold; font-size: 8.5px; width: 20px; flex: none; }
.tclk { width: 16px; height: 16px; flex: none; margin-right: 3px; }
.nm { flex: 1; font-size: 12px; letter-spacing: -.3px; color: #111; }
.flt { width: 8px; height: 14px; flex: none; display: block; }
.srt { width: 7px; height: 14px; flex: none; margin-left: 2px; display: block; }

.grid tbody th { height: 19px; padding: 2px 0 0 5px; background: #f0f0f0; font-weight: normal; text-align: left; font-size: 12px; border-right: 1px solid #777; border-bottom: 1px solid #888; line-height: 16px; }
.grid td { height: 19px; padding: 2px 6px 0; line-height: 16px; white-space: nowrap; overflow: hidden; border-right: 1px solid #efefef; border-bottom: 1px solid #efefef; background: #fff; }
.grid tbody td:nth-child(7) { letter-spacing: .22px; }
.grid tbody tr:nth-child(odd) td { background: #dce6f2; }
.grid tbody tr td.fill { border-right: 0; background: #fff; }
.grid tbody tr.cur td { background: #bdd4eb; }
.grid tbody tr.cur td.fill { background: #fff; }
.grid tbody tr.cur th { background: #7ab8ea; }
.grid tbody tr.cur td.focus { background: #6ba9e0; color: #e4edf6; outline: 2px solid #111; outline-offset: -2px; }
.n { text-align: right; }
.grid td.nul { text-align: right; color: #a6a6a6; padding-right: 7px; }
.grid td.lk { padding-left: 4px; }
.lk svg { width: 10px; height: 10px; margin-right: 5px; vertical-align: -1px; }
.grid td.rk { text-align: right; padding-right: 8px; }
.rk svg { width: 10px; height: 10px; margin-left: 4px; vertical-align: -1px; }

.vscroll { width: 15px; flex: none; display: flex; flex-direction: column; align-items: center; background: #efefef; }
.vs-up { margin-top: 6px; height: 6px; }
.vs-down { height: 6px; margin-bottom: 6px; }
.vthumb { width: 15px; height: 60px; background: #cdcdcd; margin-top: 5px; flex: none; }
.prail { width: 11px; flex: none; display: flex; flex-direction: column; overflow: hidden; padding-left: 3px; }
.ptab { width: 14px; height: 81px; flex: none; background: #e6e6e6; border: 1px solid #a8a8a8; padding-top: 4px; display: flex; flex-direction: column; align-items: center; overflow: hidden; }
.ptext { margin-top: 3px; }
.p1 { margin-left: 2px; } .p2 { margin-top: 8px; margin-left: 2px; } .p3 { margin-top: 8px; margin-left: 2px; }
.p4 { margin-top: 8px; margin-left: 2px; } .p5 { margin-top: 6px; margin-left: 2px; }

/* status bar */
.statusbar { height: 22px; flex: none; display: flex; align-items: center; background: #f0f0f0; overflow: hidden; }
.st { font-size: 12px; white-space: nowrap; flex: none; }
.st-dim { color: #999; }
.st-msg { letter-spacing: .08px; }
.w37 { width: 37px; } .w49 { width: 49px; } .w41 { width: 41px; } .w28 { width: 28px; } .w53 { width: 53px; }
.fetchbox { width: 54px; height: 20px; flex: none; background: #fff; border: 1px solid #8a8a8a; padding-left: 3px; font-size: 12px; line-height: 18px; }
.bluebar { width: 5px; height: 14px; flex: none; background: #0e8fd8; border-radius: 1px; margin-right: 1px; }
```
